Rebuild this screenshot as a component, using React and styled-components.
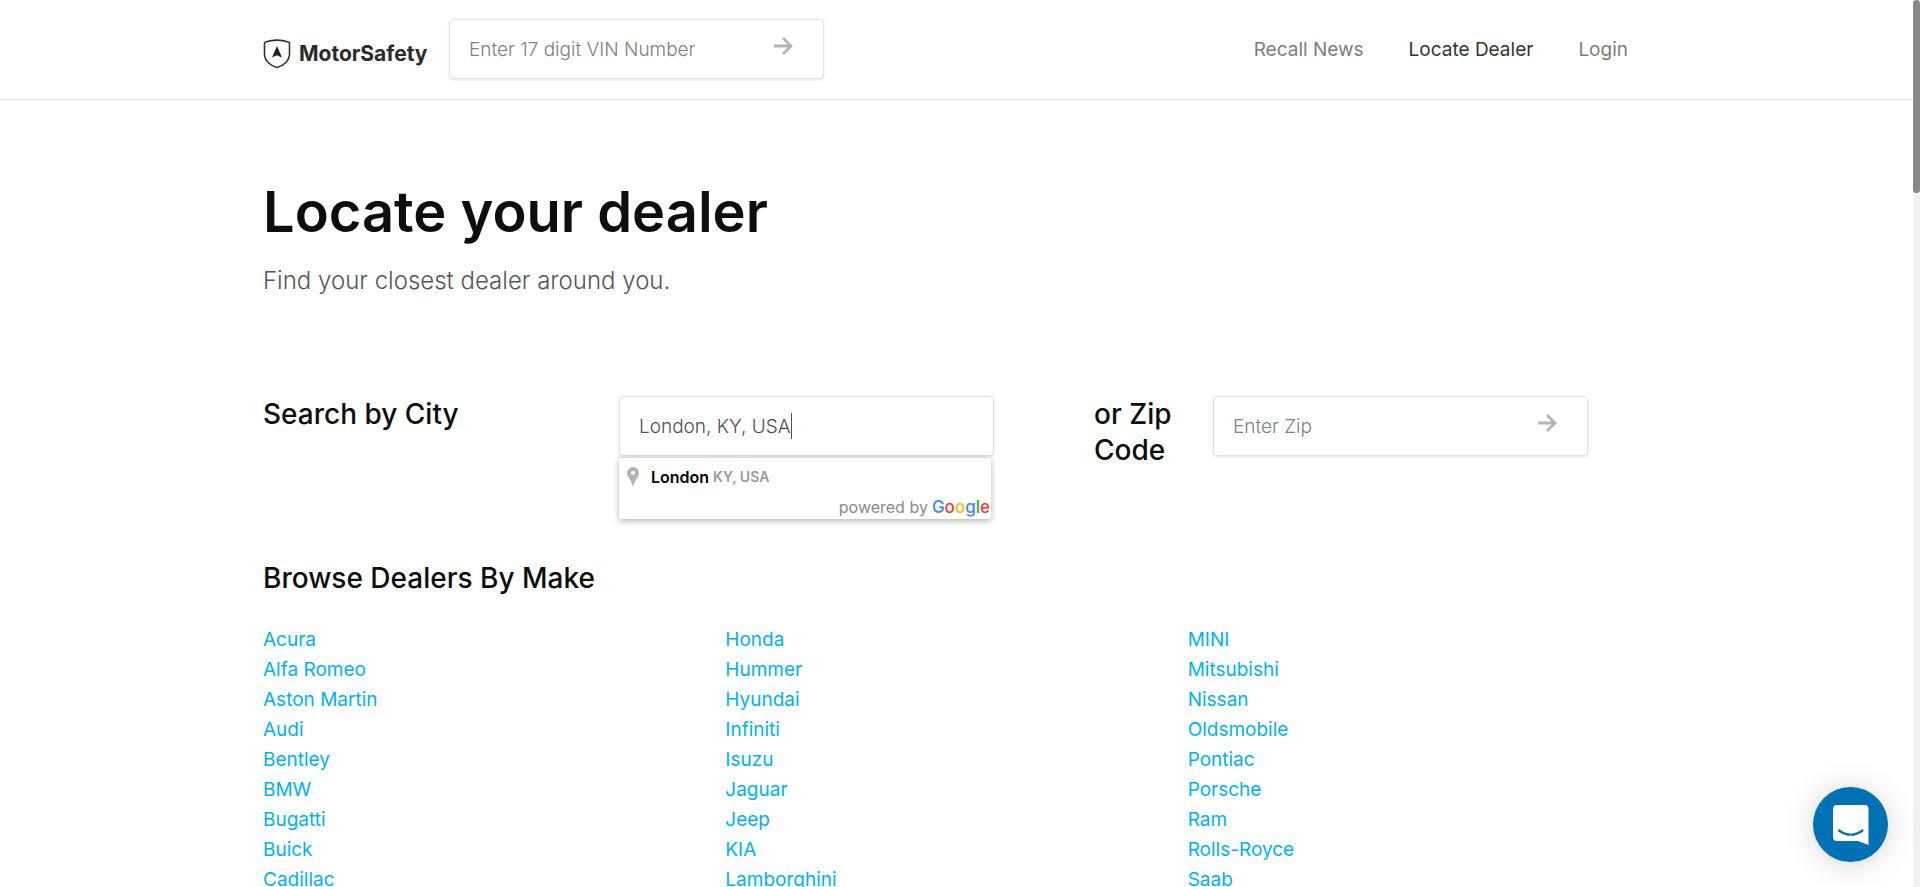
import React from "react";
import styled, { createGlobalStyle } from "styled-components";

const GlobalStyle = createGlobalStyle`
  *, *::before, *::after { box-sizing: border-box; }
  body {
    margin: 0;
    background: #fff;
    color: #0e0e0e;
    font-family: Inter, "Liberation Sans", sans-serif;
    font-size: 19px;
    line-height: 30px;
  }
  input, button { font: inherit; }
  a { text-decoration: none; }
`;

const Shell = styled.div`
  display: flex;
  height: 100vh;
  overflow: hidden;
`;

const Page = styled.div`
  flex: 1;
  min-width: 0;
`;

const ScrollTrack = styled.div`
  flex: none;
  width: 7px;
  background: #f1f1f1;
`;

const ScrollThumb = styled.div`
  height: 193px;
  border-radius: 4px;
  background: #888;
`;

const Container = styled.div`
  width: 100%;
  max-width: 1387px;
  margin: 0 auto;
`;

const Header = styled.header`
  border-bottom: 1px solid #e0e0e0;
`;

const HeaderRow = styled(Container)`
  display: flex;
  align-items: center;
  height: 99px;
  padding-bottom: 1px;
`;

const Brand = styled.a`
  display: flex;
  align-items: center;
  gap: 8px;
  width: 186px;
  padding-top: 10px;
  color: #2b2b2b;
  font-size: 21px;
  font-weight: 700;
`;

const Nav = styled.nav`
  display: flex;
  gap: 45px;
  margin-left: auto;
  padding: 2px 22px 0 0;
`;

const NavLink = styled.a`
  color: ${(p) => (p.$active ? "#333" : "#7d7d7d")};
`;

const Field = styled.div`
  position: relative;
  display: flex;
  width: 375px;
  max-width: 100%;
  height: 60px;
  border: 1px solid ${(p) => (p.$focused ? "#d9e3ed" : "#e3e3e3")};
  border-radius: 4px;
  background: #fff;
  box-shadow: 0 1px 3px rgba(0, 0, 0, 0.1);
`;

const TextInput = styled.input`
  flex: 1;
  min-width: 0;
  padding: 2px 19px 0;
  border: 0;
  outline: 0;
  background: transparent;
  color: #495057;
  font-weight: 300;
  &::placeholder { color: #808080; opacity: 1; }
`;

const GoButton = styled.button`
  display: flex;
  align-items: center;
  padding: 0 30px 6px 12px;
  border: 0;
  background: transparent;
  color: #b5b5b5;
`;

const Caret = styled.span`
  position: absolute;
  top: 16px;
  left: 171px;
  width: 1px;
  height: 26px;
  background: #495057;
`;

const Title = styled.h1`
  margin: 0;
  padding-top: 76px;
  font-size: 56px;
  line-height: 72px;
  font-weight: 600;
`;

const Lead = styled.p`
  margin: 15px 0 0;
  color: #555;
  font-size: 24px;
  line-height: 36px;
  font-weight: 300;
`;

const SearchRow = styled.section`
  display: grid;
  grid-template-columns: 356fr 475fr 119fr 437fr;
  margin-top: 97px;
`;

const Heading = styled.h2`
  margin: 0;
  font-size: 28px;
  line-height: 36px;
  font-weight: 500;
`;

const ZipHeading = styled(Heading)`
  max-width: 100px;
`;

const CityField = styled.div`
  position: relative;
`;

const Suggestions = styled.div`
  position: absolute;
  top: 61px;
  left: 0;
  width: 372px;
  border-top: 1px solid #d9d9d9;
  border-radius: 2px;
  background: #fff;
  box-shadow: 0 2px 6px rgba(0, 0, 0, 0.3);
`;

const Suggestion = styled.button`
  display: flex;
  align-items: center;
  width: 100%;
  height: 37px;
  padding: 0 8px;
  border: 0;
  background: transparent;
  color: #999;
  font-size: 14px;
  font-weight: 600;
  text-align: left;
`;

const Match = styled.span`
  margin: 0 4px 0 12px;
  color: #000;
  font-size: 16px;
`;

const Attribution = styled.div`
  display: flex;
  justify-content: flex-end;
  gap: 4px;
  padding: 0 1px;
  color: #8a8a8a;
  font-size: 16px;
  line-height: 24px;
`;

const GoogleName = styled.span`
  font-size: 17px;
  font-weight: 500;
`;

const Letter = styled.span`
  color: ${(p) => p.$color};
`;

const Makes = styled.section`
  margin-top: 92px;
`;

const MakeColumns = styled.div`
  display: grid;
  grid-template-columns: repeat(3, 1fr);
  margin-top: 29px;
`;

const MakeList = styled.ul`
  margin: 0;
  padding: 0;
  list-style: none;
`;

const MakeLink = styled.a`
  color: #00b2f3;
`;

const ChatButton = styled.button`
  position: fixed;
  right: 32px;
  bottom: 25px;
  display: flex;
  align-items: center;
  justify-content: center;
  width: 75px;
  height: 75px;
  padding: 0;
  border: 0;
  border-radius: 50%;
  background: #0071b2;
  box-shadow: 0 1px 6px rgba(0, 0, 0, 0.06), 0 2px 32px rgba(0, 0, 0, 0.16);
`;

const Shield = () => (
  <svg width="28" height="30" viewBox="0 0 28 30" fill="none" aria-hidden="true">
    <path
      d="M1.5 4.5Q1.5 3.4 2.6 3.1Q14 -0.8 25.4 3.1Q26.5 3.4 26.5 4.5V15C26.5 21.5 21 26.5 14 28.5C7 26.5 1.5 21.5 1.5 15Z"
      stroke="#333"
      strokeWidth="1.6"
    />
    <path d="M14 7L19 18.6L14 16.2L9 18.6Z" fill="#222" />
  </svg>
);

const Arrow = () => (
  <svg width="19" height="18" viewBox="0 0 19 18" fill="none" stroke="currentColor" strokeWidth="2.8" aria-hidden="true">
    <path d="M0 9H17M9 1L17 9L9 17" />
  </svg>
);

const Pin = () => (
  <svg width="12" height="20" viewBox="0 0 12 20" aria-hidden="true">
    <path
      fillRule="evenodd"
      fill="#b3b3b3"
      d="M6 0A6 6 0 0 1 12 6C12 10 8 12 6 20C4 12 0 10 0 6A6 6 0 0 1 6 0ZM6 4A2 2 0 1 0 6 8A2 2 0 1 0 6 4Z"
    />
  </svg>
);

const ChatIcon = () => (
  <svg width="36" height="40" viewBox="0 0 36 40" aria-hidden="true">
    <path d="M4 0H32Q35.5 0 35.5 4V40L25 36H4Q0 36 0 32V4Q0 0 4 0Z" fill="#fff" />
    <path d="M6 25.5Q17.8 34 29.5 25.5" fill="none" stroke="#0071b2" strokeWidth="2.2" strokeLinecap="round" />
  </svg>
);

const makes = [
  ["Acura", "Alfa Romeo", "Aston Martin", "Audi", "Bentley", "BMW", "Bugatti", "Buick", "Cadillac"],
  ["Honda", "Hummer", "Hyundai", "Infiniti", "Isuzu", "Jaguar", "Jeep", "KIA", "Lamborghini"],
  ["MINI", "Mitsubishi", "Nissan", "Oldsmobile", "Pontiac", "Porsche", "Ram", "Rolls-Royce", "Saab"],
];

const google = [
  ["G", "#4285f4"],
  ["o", "#ea4335"],
  ["o", "#fbbc05"],
  ["g", "#4285f4"],
  ["l", "#34a853"],
  ["e", "#ea4335"],
];

export default function App() {
  return (
    <>
      <GlobalStyle />
      <Shell>
        <Page>
          <Header>
            <HeaderRow>
              <Brand href="#home">
                <Shield />
                MotorSafety
              </Brand>
              <Field>
                <TextInput aria-label="VIN number" placeholder="Enter 17 digit VIN Number" />
                <GoButton type="button" aria-label="Check VIN"><Arrow /></GoButton>
              </Field>
              <Nav>
                <NavLink href="#news">Recall News</NavLink>
                <NavLink href="#dealers" $active>Locate Dealer</NavLink>
                <NavLink href="#login">Login</NavLink>
              </Nav>
            </HeaderRow>
          </Header>
          <Container as="main">
            <Title>Locate your dealer</Title>
            <Lead>Find your closest dealer around you.</Lead>
            <SearchRow>
              <Heading><label htmlFor="city">Search by City</label></Heading>
              <CityField>
                <Field $focused>
                  <TextInput id="city" defaultValue="London, KY, USA" />
                  <Caret />
                </Field>
                <Suggestions>
                  <Suggestion type="button">
                    <Pin />
                    <Match>London</Match>
                    KY, USA
                  </Suggestion>
                  <Attribution>
                    powered by
                    <GoogleName>
                      {google.map(([letter, color], i) => (
                        <Letter key={i} $color={color}>{letter}</Letter>
                      ))}
                    </GoogleName>
                  </Attribution>
                </Suggestions>
              </CityField>
              <ZipHeading><label htmlFor="zip">or Zip Code</label></ZipHeading>
              <Field>
                <TextInput id="zip" placeholder="Enter Zip" />
                <GoButton type="button" aria-label="Search by zip code"><Arrow /></GoButton>
              </Field>
            </SearchRow>
            <Makes>
              <Heading>Browse Dealers By Make</Heading>
              <MakeColumns>
                {makes.map((column) => (
                  <MakeList key={column[0]}>
                    {column.map((make) => (
                      <li key={make}><MakeLink href={"#" + make}>{make}</MakeLink></li>
                    ))}
                  </MakeList>
                ))}
              </MakeColumns>
            </Makes>
          </Container>
        </Page>
        <ScrollTrack><ScrollThumb /></ScrollTrack>
      </Shell>
      <ChatButton type="button" aria-label="Open chat"><ChatIcon /></ChatButton>
    </>
  );
}
